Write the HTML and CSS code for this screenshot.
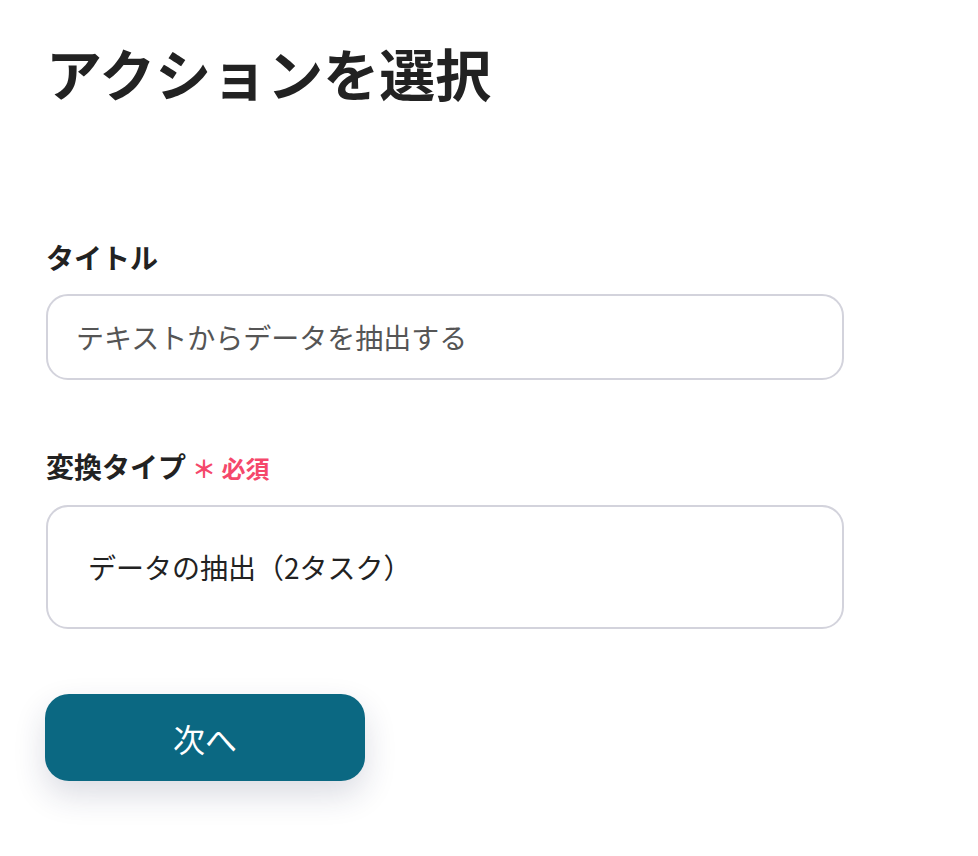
FILE: index.html
```html
<!DOCTYPE html>
<html lang="ja">
<head>
    <meta charset="UTF-8">
    <meta name="viewport" content="width=device-width, initial-scale=1.0">
    <title>アクションを選択</title>
    <link rel="stylesheet" href="styles.css">
</head>
<body>

    <!-- Titolo della pagina -->
    <h1 class="page-title">アクションを選択</h1>

    <form class="action-form">
        <!-- Campo titolo -->
        <div class="field">
            <label class="field-label" for="title">タイトル</label>
            <div class="input-box" id="title">テキストからデータを抽出する</div>
        </div>

        <!-- Campo tipo di conversione -->
        <div class="field">
            <label class="field-label" for="type">変換タイプ<span class="required">＊ 必須</span></label>
            <div class="select-box" id="type">データの抽出（2タスク）</div>
        </div>

        <button type="button" class="next-btn">次へ</button>
    </form>

</body>
</html>
```

FILE: styles.css
```css
body {
    margin: 0;
    padding: 0 0 60px 46px;
    background-color: #fff;
    color: #222;
    font-family: 'Noto Sans CJK JP', 'Noto Sans', sans-serif;
}
.page-title {
    margin: 34px 0 0 0;
    font-size: 56px;
    line-height: 76px;
    font-weight: bold;
    color: #222;
}
.action-form {
    margin-top: 129px;
    width: 798px;
}
.field {
    margin-bottom: 68px;
}
.field-label {
    display: block;
    font-size: 28px;
    line-height: 36px;
    font-weight: bold;
    margin-bottom: 19px;
}
.required {
    color: #f5486b;
    font-size: 24px;
    margin-left: 6px;
}
.input-box, .select-box {
    box-sizing: border-box;
    border: 2px solid #d3d3dc;
    border-radius: 22px;
    display: flex;
    align-items: center;
    font-size: 28px;
}
.input-box {
    height: 86px;
    padding-left: 28px;
    color: #555;
}
.select-box {
    height: 124px;
    padding-left: 40px;
    color: #222;
}
.field:last-of-type {
    margin-bottom: 65px;
}
.next-btn {
    display: block;
    width: 320px;
    height: 87px;
    margin-left: -1px;
    border: none;
    border-radius: 24px;
    background-color: #0b6882;
    color: #fff;
    font-family: inherit;
    font-size: 32px;
    box-shadow: 0 14px 32px rgba(30, 40, 80, 0.16);
}
```
